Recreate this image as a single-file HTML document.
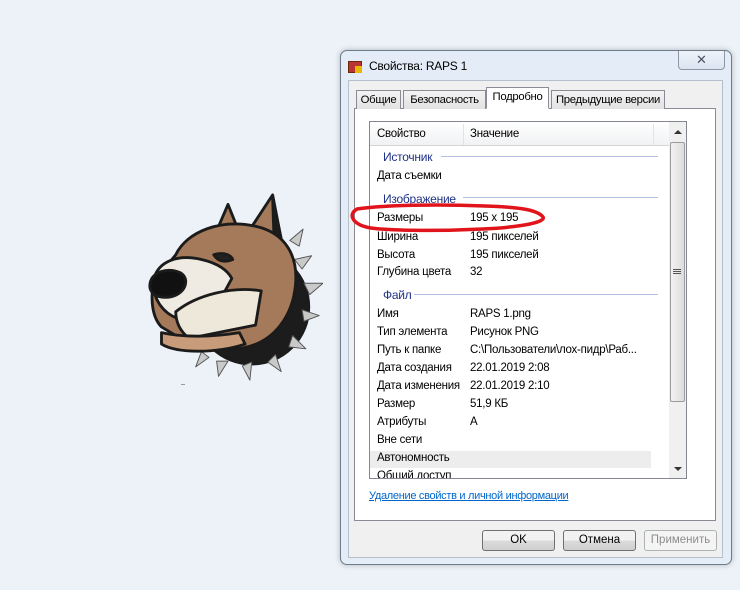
<!DOCTYPE html>
<html><head><meta charset="utf-8"><style>
*{margin:0;padding:0;box-sizing:border-box}
body{width:740px;height:590px;background:#edf2f9;position:relative;overflow:hidden;font-family:"Liberation Sans","DejaVu Sans",sans-serif;font-size:11.5px;color:#000}
.abs{position:absolute}
#win{left:340px;top:50px;width:392px;height:515px;border:1px solid #6d7b8b;border-radius:7px;background:#e4edf7;box-shadow:0 0 6px rgba(0,0,0,.25)}
#client{left:348px;top:80px;width:375px;height:478px;background:#f0f0f0;border:1px solid #b4c0ce}
.tab{position:absolute;top:90px;height:19px;border:1px solid #898c95;border-bottom:none;background:linear-gradient(#f3f3f3,#e2e2e2);font-size:11.3px;padding:3px 0 0;text-align:center;white-space:nowrap;letter-spacing:-0.3px}
#panel{left:354px;top:108px;width:362px;height:413px;background:#fff;border:1px solid #898c95}
#list{left:369px;top:121px;width:318px;height:358px;border:1px solid #828790;background:#fff;overflow:hidden}
.t{position:absolute;font-size:11.5px;white-space:nowrap;letter-spacing:-0.25px}
.g{color:#1e3287}
.ln{position:absolute;height:1px;background:#b3c1e1}
.btn{position:absolute;top:530px;height:21px;width:73px;border:1px solid #707070;border-radius:3px;background:linear-gradient(#f2f2f2 50%,#dcdcdc 50%,#cfcfcf);text-align:center;font-size:11.5px;padding-top:3px}
</style></head><body>
<!-- dog -->
<svg class="abs" style="left:133px;top:188px" width="190" height="200" viewBox="0 0 200 210">
<g stroke="#1b1b1b" stroke-width="3" stroke-linejoin="round">
<circle cx="125" cy="125" r="60" fill="#1c1c1c"/>
<g fill="#c9c9c9" stroke="#555" stroke-width="1">
<path d="M170 75l18-4-10 14z"/><path d="M180 100l20 0-14 12z"/><path d="M178 128l18 6-16 6z"/><path d="M168 155l14 14-18-2z"/><path d="M150 175l6 18-14-10z"/><path d="M125 183l-2 19-8-15z"/><path d="M100 182l-10 16-2-16z"/><path d="M80 178l-14 10 6-16z"/><path d="M165 55l14-12-4 18z"/>
</g>
<path d="M88 45l12-28 12 30z" fill="#a57a5a"/>
<path d="M122 45l25-38 10 52-10 20z" fill="#a57a5a"/>
<path d="M147 10l10 48-8 12z" fill="#1c1c1c"/>
<path d="M45 70c12-25 48-38 84-30 32 7 45 32 42 62-3 32-22 60-55 66-28 5-55-2-66-10l-20-12c-10-10-12-30-8-48z" fill="#a57a5a"/>
<path d="M22 95c5-18 25-26 50-20 18 4 28 12 32 20l-12 22-45 20c-14-5-28-20-25-42z" fill="#efebe2"/>
<path d="M18 100c2-12 18-17 32-11 10 6 6 21-9 25-14 3-25-3-23-14z" fill="#111"/>
<path d="M45 130c22-18 60-27 90-22l-6 36-70 14c-10-8-14-18-14-28z" fill="#eee8da"/>
<path d="M30 152c22 5 52 5 82 0l6 12c-30 10-72 10-88 0z" fill="#c89b7a"/>
<path d="M85 70c10-3 18 0 20 5-8 3-15 3-20-5z" fill="#222"/>
</g>
</svg>
<div class="abs" style="left:181px;top:384px;width:4px;height:1px;background:#999"></div>

<div id="win" class="abs"></div>
<div class="abs" style="left:678px;top:51px;width:47px;height:19px;border:1px solid #8b97a5;border-top:none;border-radius:0 0 4px 4px;background:linear-gradient(#eef3f9,#dbe5f1);text-align:center;color:#4a5462;font-size:13px;line-height:17px">✕</div>
<div class="abs" style="left:348px;top:61px;width:14px;height:12px;background:#b33;border:1px solid #6a2a0a"></div>
<div class="abs" style="left:355px;top:66px;width:7px;height:7px;background:#e8b800"></div>
<div class="t" style="left:369px;top:59px;font-size:12px">Свойства: RAPS 1</div>
<div id="client" class="abs"></div>
<div id="panel" class="abs"></div>
<div class="tab" style="left:356px;width:45px">Общие</div>
<div class="tab" style="left:403px;width:83px">Безопасность</div>
<div class="tab" style="left:486px;top:87px;height:22px;width:63px;background:#fff;border-bottom:1px solid #fff">Подробно</div>
<div class="tab" style="left:551px;width:114px">Предыдущие версии</div>

<div id="list" class="abs">
<div class="abs" style="left:0;top:0;width:300px;height:24px;background:linear-gradient(#fff,#f1f2f4);border-bottom:1px solid #d5d5d5"></div>
<div class="abs" style="left:93px;top:2px;width:1px;height:21px;background:#e3e3e3"></div>
<div class="abs" style="left:283px;top:2px;width:1px;height:21px;background:#e3e3e3"></div>
<div class="abs" style="left:0;top:329px;width:281px;height:17px;background:#ededed"></div>
<div class="abs" style="left:299px;top:0;width:17px;height:356px;background:#f0f0f0"></div>
<div class="abs" style="left:300px;top:20px;width:15px;height:260px;border:1px solid #9c9c9c;border-radius:2px;background:linear-gradient(90deg,#f2f2f2,#dcdcdc)"></div>
<div class="abs" style="left:303px;top:147px;width:8px;height:1px;background:#555;box-shadow:0 2px #555,0 4px #555"></div>
<div class="abs" style="left:304px;top:8px;border:4px solid transparent;border-bottom-color:#333;border-top:none"></div>
<div class="abs" style="left:304px;top:345px;border:4px solid transparent;border-top-color:#333;border-bottom:none"></div>
</div>
<div class="t" style="left:377px;top:128px">Свойство</div>
<div class="t" style="left:470px;top:128px">Значение</div>
<div class="t g" style="left:383px;top:150px;font-size:12px">Источник</div><div class="ln" style="left:441px;top:156px;width:217px"></div>
<div class="t" style="left:377px;top:170px">Дата съемки</div>
<div class="t g" style="left:383px;top:192px;font-size:12px">Изображение</div><div class="ln" style="left:463px;top:197px;width:195px"></div>
<div class="t" style="left:377px;top:212px">Размеры</div><div class="t" style="left:470px;top:212px">195 x 195</div>
<div class="t" style="left:377px;top:231px">Ширина</div><div class="t" style="left:470px;top:231px">195 пикселей</div>
<div class="t" style="left:377px;top:249px">Высота</div><div class="t" style="left:470px;top:249px">195 пикселей</div>
<div class="t" style="left:377px;top:266px">Глубина цвета</div><div class="t" style="left:470px;top:266px">32</div>
<div class="t g" style="left:383px;top:288px;font-size:12px">Файл</div><div class="ln" style="left:414px;top:294px;width:244px"></div>
<div class="t" style="left:377px;top:308px">Имя</div><div class="t" style="left:470px;top:308px">RAPS 1.png</div>
<div class="t" style="left:377px;top:326px">Тип элемента</div><div class="t" style="left:470px;top:326px">Рисунок PNG</div>
<div class="t" style="left:377px;top:344px">Путь к папке</div><div class="t" style="left:470px;top:344px">C:\Пользователи\лох-пидр\Раб...</div>
<div class="t" style="left:377px;top:362px">Дата создания</div><div class="t" style="left:470px;top:362px">22.01.2019 2:08</div>
<div class="t" style="left:377px;top:380px">Дата изменения</div><div class="t" style="left:470px;top:380px">22.01.2019 2:10</div>
<div class="t" style="left:377px;top:398px">Размер</div><div class="t" style="left:470px;top:398px">51,9 КБ</div>
<div class="t" style="left:377px;top:416px">Атрибуты</div><div class="t" style="left:470px;top:416px">A</div>
<div class="t" style="left:377px;top:434px">Вне сети</div>
<div class="t" style="left:377px;top:452px">Автономность</div>
<div class="abs" style="left:370px;top:470px;width:290px;height:8px;overflow:hidden"><div class="t" style="left:7px;top:0">Общий доступ</div></div>

<svg class="abs" style="left:345px;top:200px" width="205" height="36" viewBox="0 0 205 36">
<path d="M12 9C40 5 90 4 140 6c30 1 52 3 58 11 3 5-20 10-60 12-40 2-90 2-112 -1C8 25 2 15 12 9z" fill="none" stroke="#e1141b" stroke-width="3.5"/>
</svg>

<div class="t" style="left:369px;top:490px;color:#0066cc;text-decoration:underline;font-size:11px;letter-spacing:-0.3px">Удаление свойств и личной информации</div>
<div class="btn" style="left:482px">OK</div>
<div class="btn" style="left:563px">Отмена</div>
<div class="btn" style="left:644px;border-color:#adb2b5;background:#f4f4f4;color:#8d8d8d">Применить</div>
</body></html>
